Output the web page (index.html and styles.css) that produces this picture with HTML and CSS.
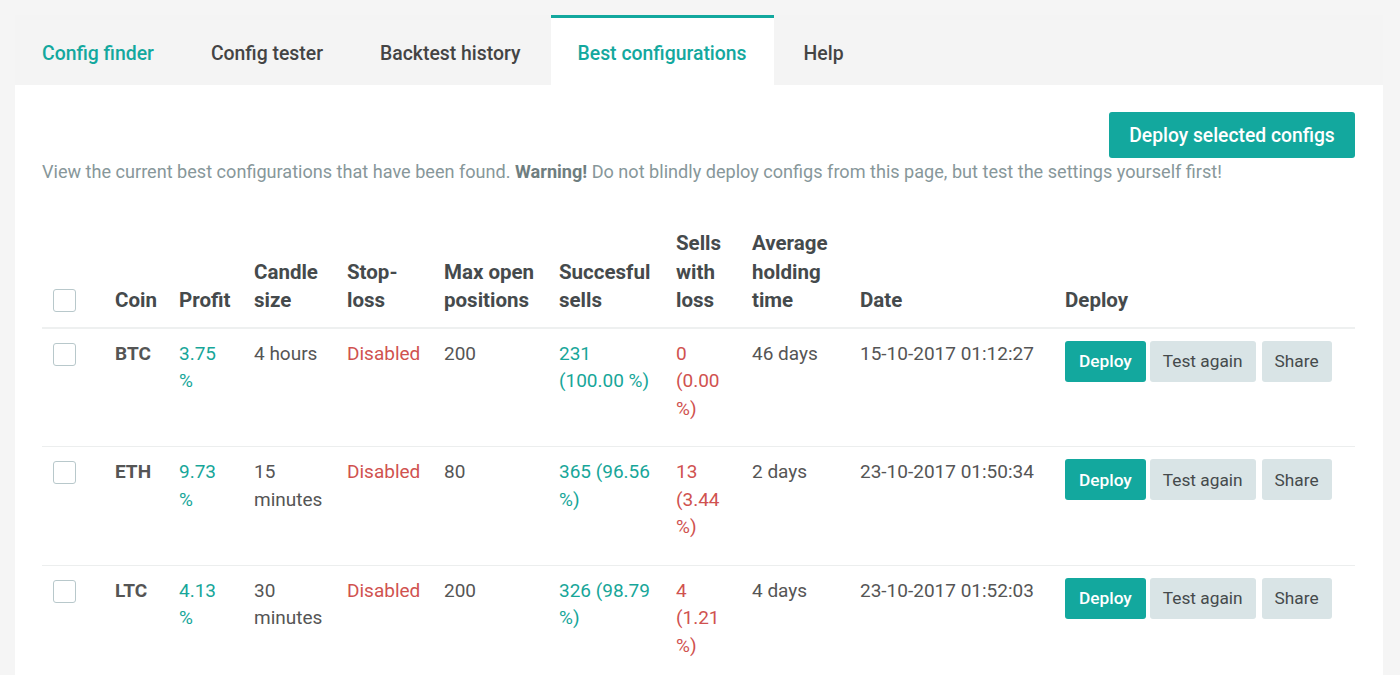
FILE: index.html
```html
<!DOCTYPE html>
<html lang="en">
<head>
<meta charset="utf-8">
<title>Best configurations</title>
<link rel="stylesheet" href="styles.css">
</head>
<body>
<div class="page">
  <nav class="tabs">
    <a class="tab tab-link">Config finder</a>
    <a class="tab">Config tester</a>
    <a class="tab">Backtest history</a>
    <a class="tab tab-active">Best configurations</a>
    <a class="tab">Help</a>
  </nav>
  <section class="card">
    <div class="toolbar">
      <button class="btn btn-primary btn-large">Deploy selected configs</button>
    </div>
    <p class="intro">View the current best configurations that have been found. <strong>Warning!</strong> Do not blindly deploy configs from this page, but test the settings yourself first!</p>
    <table class="configs">
      <colgroup>
        <col class="c-check"><col class="c-coin"><col class="c-profit"><col class="c-candle"><col class="c-stop"><col class="c-max"><col class="c-succ"><col class="c-loss"><col class="c-avg"><col class="c-date"><col class="c-deploy">
      </colgroup>
      <thead>
        <tr>
          <th><span class="check"></span></th>
          <th>Coin</th>
          <th class="nowrap">Profit</th>
          <th>Candle size</th>
          <th>Stop-loss</th>
          <th>Max open positions</th>
          <th>Succesful sells</th>
          <th>Sells with loss</th>
          <th>Average holding time</th>
          <th>Date</th>
          <th>Deploy</th>
        </tr>
      </thead>
      <tbody>
        <tr>
          <td><span class="check"></span></td>
          <td class="coin">BTC</td>
          <td class="good">3.75 %</td>
          <td>4 hours</td>
          <td class="bad">Disabled</td>
          <td>200</td>
          <td class="good">231 (100.00 %)</td>
          <td class="bad">0 (0.00 %)</td>
          <td>46 days</td>
          <td>15-10-2017 01:12:27</td>
          <td class="cell-actions"><div class="actions"><button class="btn btn-primary">Deploy</button><button class="btn btn-light">Test again</button><button class="btn btn-light">Share</button></div></td>
        </tr>
        <tr>
          <td><span class="check"></span></td>
          <td class="coin">ETH</td>
          <td class="good">9.73 %</td>
          <td>15 minutes</td>
          <td class="bad">Disabled</td>
          <td>80</td>
          <td class="good">365 (96.56 %)</td>
          <td class="bad">13 (3.44 %)</td>
          <td>2 days</td>
          <td>23-10-2017 01:50:34</td>
          <td class="cell-actions"><div class="actions"><button class="btn btn-primary">Deploy</button><button class="btn btn-light">Test again</button><button class="btn btn-light">Share</button></div></td>
        </tr>
        <tr>
          <td><span class="check"></span></td>
          <td class="coin">LTC</td>
          <td class="good">4.13 %</td>
          <td>30 minutes</td>
          <td class="bad">Disabled</td>
          <td>200</td>
          <td class="good">326 (98.79 %)</td>
          <td class="bad">4 (1.21 %)</td>
          <td>4 days</td>
          <td>23-10-2017 01:52:03</td>
          <td class="cell-actions"><div class="actions"><button class="btn btn-primary">Deploy</button><button class="btn btn-light">Test again</button><button class="btn btn-light">Share</button></div></td>
        </tr>
      </tbody>
    </table>
  </section>
</div>
</body>
</html>
```

FILE: styles.css
```css
* { box-sizing: border-box; }
html, body { margin: 0; padding: 0; }
body {
  background: #f5f5f5;
  font-family: Roboto, "Liberation Sans", sans-serif;
  font-size: 19px;
  color: #555;
  overflow: hidden;
}
.page {
  padding: 15px 17px 0 15px;
}
.tabs {
  display: flex;
  height: 70px;
  background: #f4f4f4;
}
.tab {
  display: flex;
  align-items: center;
  padding: 3px 27px 0 27px;
  margin-right: 3px;
  font-weight: 500;
  font-size: 19.4px;
  color: #444;
  border-top: 3px solid transparent;
}
.tab-link { color: #13a89e; }
.tab-active {
  background: #fff;
  color: #13a89e;
  border-top-color: #13a89e;
}
.card {
  background: #fff;
  padding: 27px 28px 40px 27px;
  min-height: 600px;
}
.toolbar {
  display: flex;
  justify-content: flex-end;
}
.btn {
  font-family: Roboto, "Liberation Sans", sans-serif;
  border: 0;
  border-radius: 3px;
  font-size: 17.3px;
  height: 41px;
  padding: 0 13px;
  cursor: pointer;
}
.btn-primary {
  background: #13a89e;
  color: #fff;
  font-weight: 500;
}
.btn-light {
  background: #d9e4e6;
  color: #454a4c;
}
.btn-large {
  font-size: 19.3px;
  height: 46px;
  padding: 0 20px;
  width: 246px;
}
.intro {
  margin: 0;
  line-height: 27px;
  font-size: 18.1px;
  color: #87979a;
}
.intro strong { color: #6f7e80; font-weight: 700; }
.configs {
  margin-top: 44px;
  width: 1313px;
  table-layout: fixed;
  border-collapse: collapse;
  line-height: 28.5px;
}
.c-check { width: 62px; }
.c-coin { width: 64px; }
.c-profit { width: 75px; }
.c-candle { width: 93px; }
.c-stop { width: 97px; }
.c-max { width: 115px; }
.c-succ { width: 117px; }
.c-loss { width: 76px; }
.c-avg { width: 108px; }
.c-date { width: 205px; }
.c-deploy { width: 301px; }
.configs th {
  text-align: left;
  vertical-align: bottom;
  font-weight: 700;
  font-size: 20.5px;
  color: #454a4c;
  padding: 0 11px 12px 11px;
  border-bottom: 2px solid #eef0f0;
}
.configs th.nowrap { white-space: nowrap; }
.configs td {
  vertical-align: top;
  padding: 11px 11px 24px 11px;
  line-height: 27.5px;
  border-bottom: 1px solid #eceeee;
}
.configs tbody tr:last-child td { border-bottom: 0; }
.check {
  display: block;
  width: 23px;
  height: 23px;
  border: 1px solid #b8c8cb;
  border-radius: 3px;
  background: #fff;
}
th .check { margin-bottom: 3px; }
td .check { margin-top: 3px; }
.coin { font-weight: 700; color: #555; }
.good { color: #17a699; }
.bad { color: #d0524f; }
.configs td.cell-actions { padding-top: 12px; }
.actions {
  display: flex;
  gap: 4px;
}
.btn-primary.btn-small, .actions .btn-primary { padding: 0 14px; }
.actions .btn-light + .btn-light { margin-left: 2px; }
```
